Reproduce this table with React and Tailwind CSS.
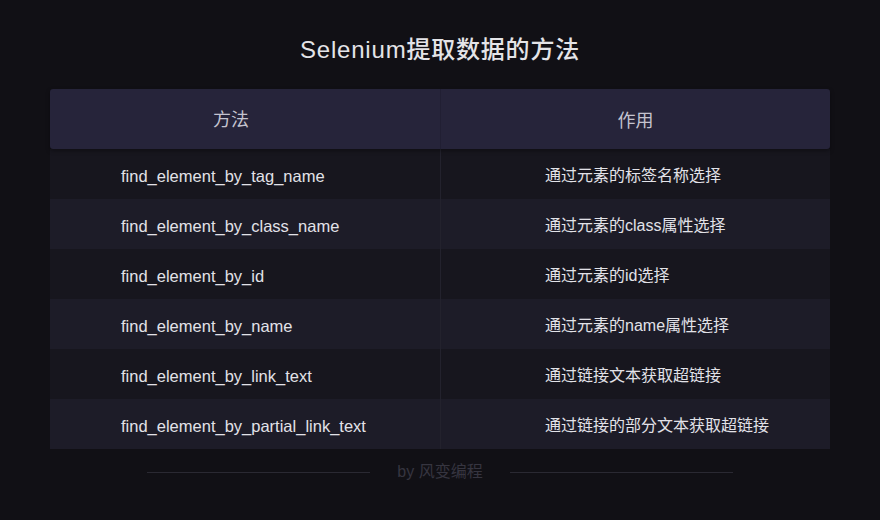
import React from "react";

const rows = [
  ["find_element_by_tag_name", "通过元素的标签名称选择"],
  ["find_element_by_class_name", "通过元素的class属性选择"],
  ["find_element_by_id", "通过元素的id选择"],
  ["find_element_by_name", "通过元素的name属性选择"],
  ["find_element_by_link_text", "通过链接文本获取超链接"],
  ["find_element_by_partial_link_text", "通过链接的部分文本获取超链接"],
];

export default function App() {
  return (
    <div
      className="w-[880px] h-[520px] bg-[#111015] flex flex-col items-center"
      style={{ fontFamily: '"Liberation Sans", "Noto Sans CJK SC", sans-serif' }}
    >
      {/* TITLE */}
      <h1 className="mt-[34px] h-[32px] leading-[32px] text-[24px] font-medium text-[#e4e4e8] tracking-[0.8px]">
        Selenium提取数据的方法
      </h1>

      {/* TABLE */}
      <div className="mt-[23px] w-[780px]">
        <div className="relative z-10 h-[60px] flex rounded-[3px] bg-[#26243a] shadow-[0_2px_4px_rgba(0,0,0,0.35)] text-[18px] text-[#c4c3cf]">
          <div className="w-[391px] flex items-center pl-[163px] pt-[3px] border-r border-[#211f33]">
            方法
          </div>
          <div className="flex-1 flex items-center justify-center pt-[5px]">
            作用
          </div>
        </div>

        {rows.map(([method, desc], i) => (
          <div
            key={method}
            className={
              "h-[50px] flex text-[#e2e2e8] " +
              (i % 2 === 0 ? "bg-[#17161e]" : "bg-[#1d1c28]")
            }
          >
            <div className="w-[391px] flex items-center pl-[71px] pt-[4px] text-[16.5px] border-r border-[#23222d]">
              {method}
            </div>
            <div className="flex-1 flex items-center pl-[104px] pt-[3px] text-[16px]">
              {desc}
            </div>
          </div>
        ))}
      </div>

      {/* FOOTER */}
      <div className="mt-[12px] h-[22px] w-[586px] flex items-center">
        <div className="flex-1 h-px bg-[#2a2932]"></div>
        <span className="px-[27px] text-[16px] text-[#363540]">by 风变编程</span>
        <div className="flex-1 h-px bg-[#2a2932]"></div>
      </div>
    </div>
  );
}
